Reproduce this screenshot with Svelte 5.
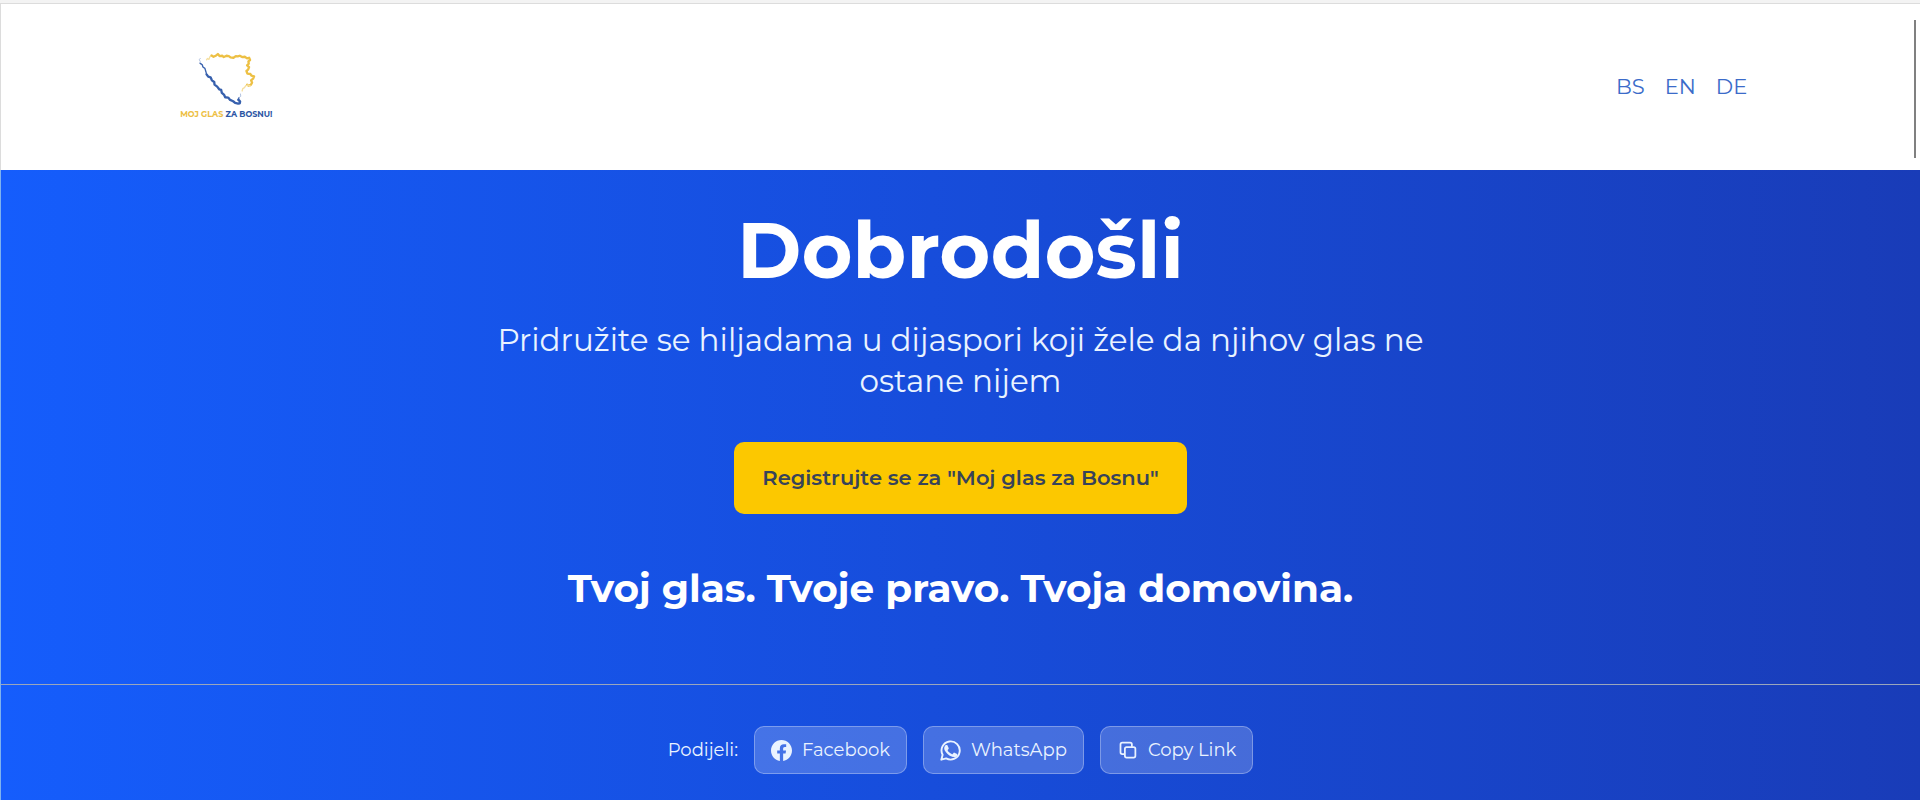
<script lang="ts">
    const languages = ['BS', 'EN', 'DE']

    let selected = $state('BS')
    let copied = $state(false)

    async function copyLink() {
        await navigator.clipboard.writeText(window.location.href)
        copied = true
    }
</script>

<div class="page">
    <header>
        <a class="logo" href="/" aria-label="Moj glas za Bosnu">
            <svg viewBox="60 62 280 168" aria-hidden="true">
                <g fill="none" stroke-linejoin="round" stroke-linecap="round">
                    <path class="faint-yellow" d="M140 85l3-4 4 3 3-8 5-4"/>
                    <path class="yellow" d="M155 72l6 4 8-4 5-4 5 6 8-1 5 4 8-4 7 1 5 4 9 1 7-5 6 1 6-2 7 4 8-1 7 5 6-2 3 7-5 4 1 7-5 5 6 5-3 8-5 4 3 8 9 1 3 5 8 2-3 7-6 5 3 7-4 7-7 2-4-3"/>
                    <path class="faint-yellow" d="M272 164l-6-3-8 2-4 6-5 3-2 7"/>
                    <path class="faint-blue" d="M121 81l-3 4 3 5-2 6 7 3"/>
                    <path class="blue thin" d="M121 96l6 4 2 7 6 4 3 10 2 8"/>
                    <path class="blue" d="M140 129l5 7 7 2 4 9 7 5 1 8 8 6 6 8 6 2 2 9 7 6 3 7 9 1 6 7 9 4 6 5 9 2 5-1 1-5-4-5"/>
                    <path class="blue thin" d="M239 210l-5-4 4-7"/>
                    <path class="faint-blue" d="M238 199l5-4-1-7"/>
                </g>
            </svg>
            <span class="name"><span>MOJ GLAS</span> ZA BOSNU!</span>
        </a>
        <nav>
            {#each languages as language}
                <button aria-pressed={selected === language} onclick={() => (selected = language)}>{language}</button>
            {/each}
        </nav>
        <div class="scroll-thumb"></div>
    </header>

    <main>
        <section class="hero">
            <h1>Dobrodošli</h1>
            <p>Pridružite se hiljadama u dijaspori koji žele da njihov glas ne ostane nijem</p>
            <a class="register" href="#register">Registrujte se za "Moj glas za Bosnu"</a>
            <h2>Tvoj glas. Tvoje pravo. Tvoja domovina.</h2>
        </section>

        <section class="share">
            <span>Podijeli:</span>
            <button>
                <svg viewBox="0 0 24 24" aria-hidden="true">
                    <path fill="currentColor" d="M24 12.07C24 5.4 18.63 0 12 0S0 5.4 0 12.07C0 18.1 4.39 23.1 10.13 24v-8.44H7.08v-3.49h3.05V9.41c0-3.02 1.79-4.69 4.53-4.69 1.31 0 2.68.24 2.68.24v2.97h-1.51c-1.49 0-1.96.93-1.96 1.89v2.25h3.33l-.53 3.49h-2.8V24C19.61 23.1 24 18.1 24 12.07z"/>
                </svg>
                Facebook
            </button>
            <button>
                <svg viewBox="0 0 24 24" aria-hidden="true">
                    <path fill="none" stroke="currentColor" stroke-width="2.2" stroke-linejoin="round" d="M1.5 22.5l1.5-5.6A10.4 10.4 0 1 1 7 21z"/>
                    <path fill="currentColor" d="M8.6 6.3c-.3-.6-.5-.6-.8-.6h-.7c-.3 0-.7.1-1 .5-.4.4-1.3 1.3-1.3 3.1s1.3 3.6 1.5 3.8c.2.3 2.6 4 6.3 5.6 3.1 1.2 3.8 1 4.4.9.7-.1 2.2-.9 2.5-1.7.3-.9.3-1.6.2-1.7-.1-.2-.3-.3-.7-.5l-2.5-1.2c-.3-.1-.6-.2-.8.2l-1.2 1.4c-.2.3-.4.3-.8.1-.4-.2-1.5-.6-2.9-1.8-1.1-1-1.8-2.1-2-2.5-.2-.4 0-.6.2-.8l.5-.6c.2-.2.2-.4.4-.6.1-.3 0-.5 0-.7z"/>
                </svg>
                WhatsApp
            </button>
            <button onclick={copyLink} class:copied>
                <svg viewBox="0 0 24 24" fill="none" stroke="currentColor" stroke-width="2" stroke-linecap="round" stroke-linejoin="round" aria-hidden="true">
                    <rect x="9" y="8" width="12" height="12" rx="2"/>
                    <path d="M8 16H6a2 2 0 0 1-2-2V5a2 2 0 0 1 2-2h9a2 2 0 0 1 2 2v2"/>
                </svg>
                Copy Link
            </button>
        </section>
    </main>
</div>

<style>
    :global(body) {
        background: #193cb8;
    }
    .page {
        display: flex;
        flex-direction: column;
        min-height: 100vh;
        box-sizing: border-box;
        border-top: 3px solid #f3f3f3;
        font-family: Montserrat, Inter, sans-serif;
    }
    header {
        position: relative;
        display: flex;
        align-items: center;
        justify-content: space-between;
        box-sizing: border-box;
        min-height: 167px;
        padding: 0 9%;
        background: white;
        border-top: 1px solid #dcdcdc;
        border-left: 1px solid #dcdcdc;
    }
    .logo {
        display: flex;
        flex-direction: column;
        align-items: center;
        gap: 2px;
        margin-left: 6px;
        padding-bottom: 4px;
        text-decoration: none;
    }
    .logo svg {
        width: 93px;
        height: 56px;
    }
    .yellow {
        stroke: #edc044;
        stroke-width: 7;
    }
    .faint-yellow {
        stroke: #f5dfa0;
        stroke-width: 4;
    }
    .blue {
        stroke: #3760ad;
        stroke-width: 7;
    }
    .blue.thin {
        stroke-width: 4;
    }
    .faint-blue {
        stroke: #b2c2df;
        stroke-width: 3;
    }
    .name {
        color: #2c56a4;
        font-size: 8px;
        font-weight: 700;
        line-height: 8px;
        white-space: nowrap;
    }
    .name span {
        color: #edc044;
    }
    nav {
        display: flex;
        gap: 20px;
    }
    button {
        font-family: inherit;
        cursor: pointer;
    }
    nav button {
        padding: 0;
        border: 0;
        background: none;
        color: #3b6bc9;
        font-size: 21px;
        line-height: 28px;
    }
    .scroll-thumb {
        position: absolute;
        top: 16px;
        right: 4px;
        bottom: 12px;
        width: 2px;
        background: #808080;
    }
    main {
        display: flex;
        flex: 1;
        flex-direction: column;
        border-left: 1px solid #7eb2ee;
        background: linear-gradient(to right, #155dfc, #193cb8);
        color: white;
    }
    .hero {
        display: flex;
        flex-direction: column;
        align-items: center;
        padding: 40px 24px 72px;
        border-bottom: 1px solid #9aa6bb;
        text-align: center;
    }
    h1 {
        margin: 0 0 30px;
        font-size: 78px;
        font-weight: 700;
        line-height: 80px;
    }
    p {
        max-width: 940px;
        margin: 0 0 40px;
        color: #eaf3ff;
        font-size: 31px;
        line-height: 41px;
    }
    .register {
        padding: 22px 28px;
        border-radius: 10px;
        background: #fcc800;
        color: #37435a;
        font-size: 21px;
        font-weight: 600;
        line-height: 28px;
        text-decoration: none;
    }
    h2 {
        margin: 50px 0 0;
        font-size: 39px;
        font-weight: 700;
        line-height: 48px;
    }
    .share {
        display: flex;
        align-items: center;
        justify-content: center;
        gap: 16px;
        padding: 41px 24px 24px;
        color: #eaf3ff;
        font-size: 18px;
        line-height: 24px;
    }
    .share button {
        display: flex;
        align-items: center;
        gap: 10px;
        padding: 11px 16px;
        border: 1px solid rgba(255, 255, 255, 0.3);
        border-radius: 10px;
        background: rgba(255, 255, 255, 0.2);
        color: #eaf3ff;
        font-size: 18px;
        line-height: 24px;
    }
    .share svg {
        width: 21px;
        height: 21px;
    }
</style>
